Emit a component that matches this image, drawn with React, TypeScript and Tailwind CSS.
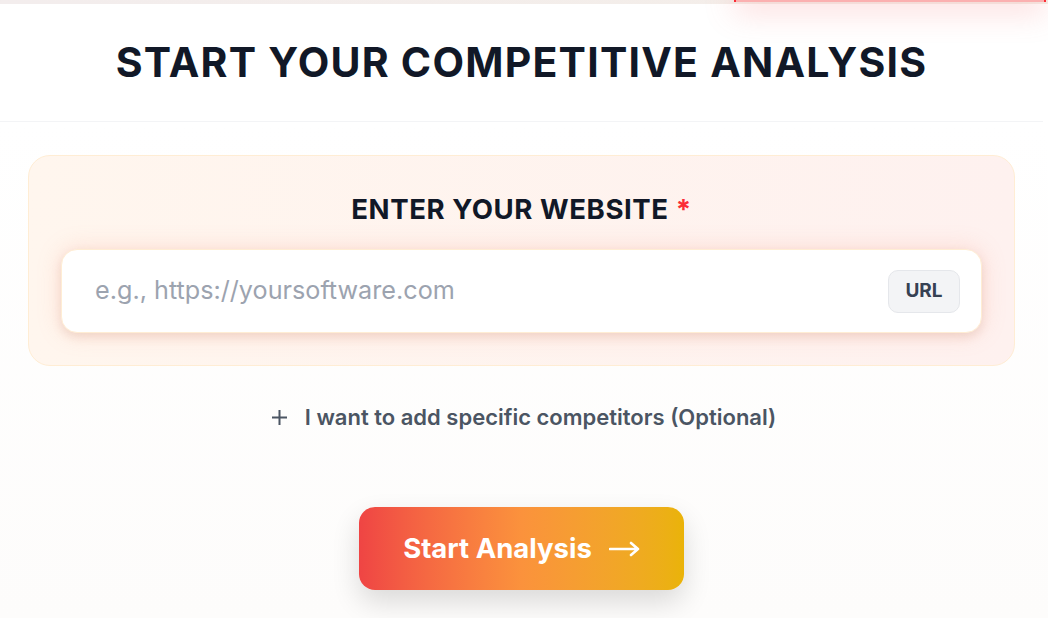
export default function App() {
  return (
    <div className="relative min-h-[618px] w-[1048px] overflow-hidden bg-white font-['Inter',sans-serif]">
      <div className="h-[4px] bg-gradient-to-r from-[#f3eded] to-[#f4eee8]" />
      <div className="absolute right-[2px] top-[-20px] h-[22px] w-[312px] border-x-2 border-red-500 bg-[#fbb0b0] shadow-[0_10px_30px_rgba(248,113,113,0.25)]" />
      <header className="flex h-[118px] w-[1043px] items-center justify-center border-b border-gray-100 bg-white">
        <h1 className="text-[41px] font-bold leading-none tracking-[0.03em] text-[#111827]">
          START YOUR COMPETITIVE ANALYSIS
        </h1>
      </header>
      <main className="min-h-[496px] bg-gradient-to-b from-white to-[#fdfcfb] pb-[28px] pt-[33px]">
        <div className="ml-[28px] flex w-[987px] flex-col">
          <section className="rounded-[22px] border border-orange-100 bg-gradient-to-r from-[#fff6ee] to-[#fef1ef] px-8 pb-8 pt-[36px]">
            <h2 className="text-center text-[27.6px] font-bold leading-[34px] tracking-[0.02em] text-[#111827]">
              ENTER YOUR WEBSITE <span className="text-red-500">*</span>
            </h2>
            <div className="mt-[23px] flex h-[84px] items-center justify-between rounded-[16px] border border-orange-100 bg-white pl-[33px] pr-[21px] shadow-[0_4px_10px_rgba(180,120,90,0.18),0_0_24px_rgba(251,146,120,0.24)]">
              <span className="text-[25.2px] text-[#9ca3af]">e.g., https://yoursoftware.com</span>
              <span className="flex h-[43px] w-[72px] items-center justify-center rounded-[10px] border border-gray-200 bg-gray-100 text-[19px] font-bold text-gray-700">
                URL
              </span>
            </div>
          </section>
          <div className="mt-[37px] flex items-center justify-center gap-[17px] pl-[4px] text-[22px] font-semibold text-[#4b5563]">
            <svg width="17" height="17" viewBox="0 0 17 17" fill="none">
              <path d="M8.5 1V16M1 8.5H16" stroke="#4b5563" strokeWidth="2" />
            </svg>
            <span className="leading-[28px]">I want to add specific competitors (Optional)</span>
          </div>
          <div className="mt-[76px] flex justify-center">
            <button className="flex h-[83px] w-[325px] items-center justify-center gap-[17px] rounded-[16px] bg-gradient-to-r from-[#ef4444] via-[#fb923c] to-[#eab308] text-[27.5px] font-bold text-white shadow-[0_12px_28px_rgba(0,0,0,0.14)]">
              <span>Start Analysis</span>
              <svg width="31" height="16" viewBox="0 0 31 16" fill="none">
                <path d="M1 8H29M22 2L29 8L22 14" stroke="white" strokeWidth="2.6" strokeLinecap="round" strokeLinejoin="round" />
              </svg>
            </button>
          </div>
        </div>
      </main>
    </div>
  );
}
